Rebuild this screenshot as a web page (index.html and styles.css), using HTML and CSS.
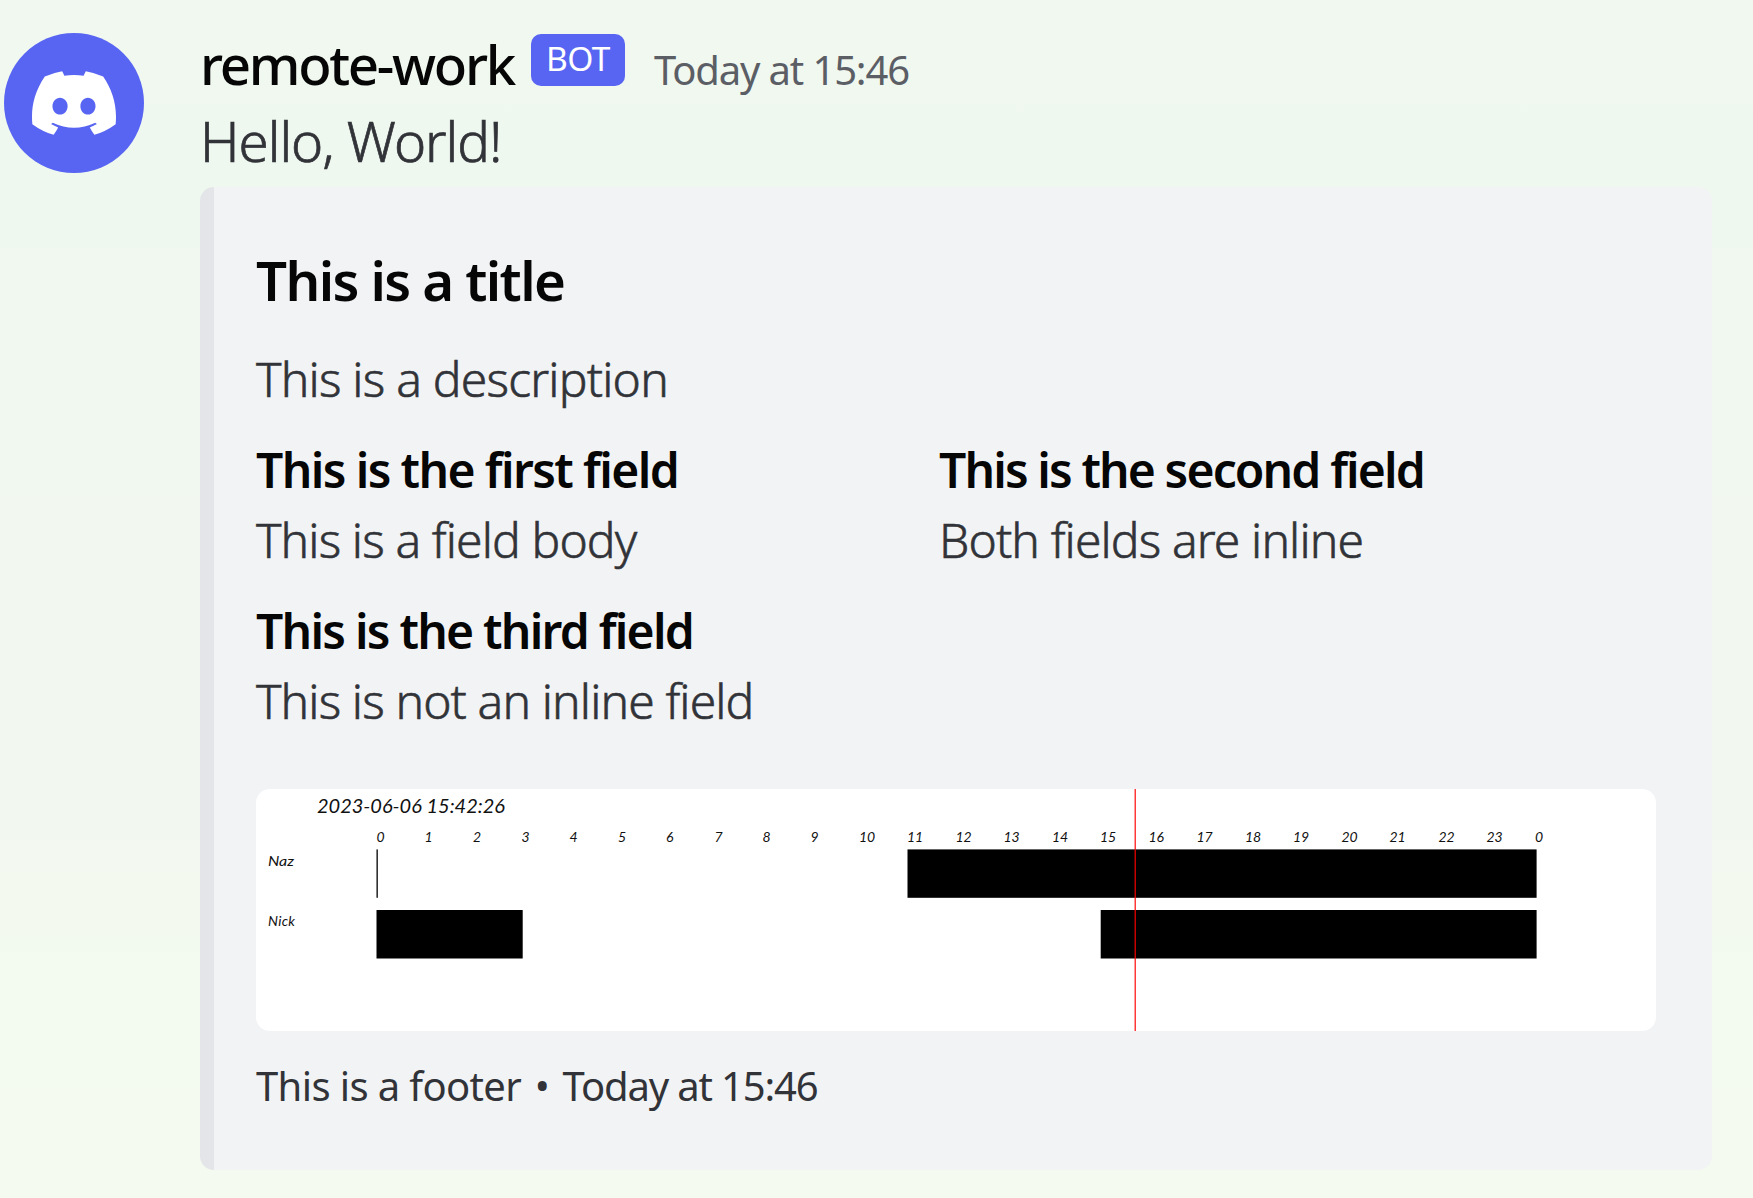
FILE: index.html
```html
<!DOCTYPE html>
<html lang="en">
<head>
<meta charset="utf-8">
<title>remote-work</title>
<link rel="stylesheet" href="styles.css">
</head>
<body>
<article class="message">
  <div class="avatar">
    <svg class="logo" viewBox="0 0 127.14 96.36"><path fill="#fff" d="M107.7,8.07A105.15,105.15,0,0,0,81.47,0a72.06,72.06,0,0,0-3.36,6.83A97.68,97.68,0,0,0,49,6.83,72.37,72.37,0,0,0,45.64,0,105.89,105.89,0,0,0,19.39,8.09C2.79,32.65-1.71,56.6.54,80.21h0A105.73,105.73,0,0,0,32.71,96.36,77.7,77.7,0,0,0,39.6,85.25a68.42,68.42,0,0,1-10.85-5.18c.91-.66,1.8-1.34,2.66-2a75.57,75.57,0,0,0,64.32,0c.87.71,1.76,1.39,2.66,2a68.68,68.68,0,0,1-10.87,5.19,77,77,0,0,0,6.89,11.1A105.25,105.25,0,0,0,126.6,80.22h0C129.24,52.84,122.09,29.11,107.7,8.07ZM42.45,65.69C36.18,65.69,31,60,31,53s5-12.74,11.43-12.74S54,46,53.89,53,48.84,65.69,42.45,65.69Zm42.24,0C78.41,65.69,73.25,60,73.25,53s5-12.74,11.44-12.74S96.23,46,96.12,53,91.08,65.69,84.69,65.69Z"/></svg>
  </div>
  <div class="body">
    <header class="header"><span class="name">remote-work</span><span class="badge">BOT</span><time class="time">Today at 15:46</time></header>
    <p class="content">Hello, World!</p>
    <section class="embed">
      <h2 class="title">This is a title</h2>
      <p class="text description">This is a description</p>
      <div class="fields">
        <div class="field"><h3 class="field-name">This is the first field</h3><p class="text">This is a field body</p></div>
        <div class="field"><h3 class="field-name second">This is the second field</h3><p class="text">Both fields are inline</p></div>
        <div class="field wide"><h3 class="field-name third">This is the third field</h3><p class="text">This is not an inline field</p></div>
      </div>
      <svg class="chart" viewBox="256 789 1400 242">
        <rect x="256" y="789" width="1400" height="242" fill="#fff"/>
        <g class="hand">
          <text class="stamp" x="317" y="812.5" textLength="188">2023-06-06 15:42:26</text>
          <text x="268" y="865.5" textLength="26" lengthAdjust="spacingAndGlyphs">Naz</text>
          <text x="268" y="926" textLength="27">Nick</text>
          <text x="376.5" y="841.5">0</text><text x="424.5" y="841.5">1</text><text x="473" y="841.5">2</text><text x="521.5" y="841.5">3</text><text x="569.5" y="841.5">4</text><text x="618" y="841.5">5</text><text x="666" y="841.5">6</text><text x="714.5" y="841.5">7</text><text x="762.5" y="841.5">8</text><text x="810.5" y="841.5">9</text>
          <text x="859" y="841.5">10</text><text x="907" y="841.5">11</text><text x="955.5" y="841.5">12</text><text x="1003.5" y="841.5">13</text><text x="1052" y="841.5">14</text><text x="1100" y="841.5">15</text><text x="1148.5" y="841.5">16</text><text x="1196.5" y="841.5">17</text><text x="1245" y="841.5">18</text><text x="1293" y="841.5">19</text><text x="1341.5" y="841.5">20</text><text x="1389.5" y="841.5">21</text><text x="1438.5" y="841.5">22</text><text x="1486.5" y="841.5">23</text><text x="1535" y="841.5">0</text>
        </g>
        <rect x="376.5" y="849.4" width="1.3" height="48.4"/>
        <rect x="907.5" y="849.4" width="629.1" height="48.4"/>
        <rect x="376.5" y="910" width="146.2" height="48.5"/>
        <rect x="1100.7" y="910" width="435.9" height="48.5"/>
        <rect x="1134.5" y="789" width="1.5" height="242" fill="#f00" fill-opacity=".78"/>
      </svg>
      <footer class="footer"><span>This is a footer</span><span>•</span><time class="when">Today at 15:46</time></footer>
    </section>
  </div>
</article>
</body>
</html>
```
FILE: styles.css
```css
* { box-sizing: border-box; }
html { height: 100%; }
body {
  margin: 0;
  height: 1198px;
  overflow: hidden;
  background: linear-gradient(180deg, #f1f8f0 0, #eef8ef 200px, #f1f8ef 300px, #f2f8ef 800px, #f3faef 1020px, #f4faef 100%);
  font-family: "Noto Sans", "Open Sans", sans-serif;
  color: #313338;
}
h2, h3, p { margin: 0; white-space: nowrap; }
.message { display: flex; gap: 56px; padding: 24px 41px 0 4px; }
.avatar {
  flex: none;
  width: 140px;
  height: 140px;
  margin-top: 9px;
  border-radius: 50%;
  background: #5865f2;
  display: flex;
  align-items: center;
  justify-content: center;
}
.logo { width: 84px; height: 64px; }
.body { flex: 1; }
.header { display: flex; height: 79px; white-space: nowrap; }
.name { width: 331px; font-size: 54.6px; line-height: 80px; font-weight: 500; letter-spacing: -2.3px; color: #060607; }
.badge {
  width: 94px;
  height: 52px;
  margin-top: 10px;
  border-radius: 10px;
  background: #5865f2;
  color: #fff;
  font-size: 33.5px;
  line-height: 48px;
  letter-spacing: -.6px;
  text-align: center;
}
.time { margin-left: 29px; font-size: 40px; line-height: 91px; letter-spacing: -1.15px; color: #5c5e66; }
.content { font-size: 54.6px; line-height: 77px; font-weight: 300; letter-spacing: -1px; -webkit-text-stroke: .7px #313338; }
.embed {
  height: 983px;
  margin-top: 7px;
  padding: 55px 56px 0 42px;
  border-left: 14px solid #e3e5e8;
  border-radius: 14px;
  background: #f2f3f5;
}
.title { font-size: 54.6px; line-height: 77px; font-weight: 600; letter-spacing: -1.6px; color: #060607; }
.text { font-size: 48px; line-height: 64px; font-weight: 300; letter-spacing: -.88px; -webkit-text-stroke: .6px #313338; }
.description { margin-top: 28px; letter-spacing: -.79px; }
.fields { display: grid; grid-template-columns: 683px 1fr; row-gap: 27px; margin-top: 27px; }
.field { display: grid; gap: 6px; }
.wide { grid-column: 1 / -1; }
.field-name { font-size: 48px; line-height: 64px; font-weight: 600; letter-spacing: -1.6px; color: #060607; }
.second { letter-spacing: -1.87px; }
.third { letter-spacing: -1.75px; }
.chart { display: block; width: 1400px; height: 242px; margin-top: 56px; border-radius: 14px; }
.hand { font-family: "Lato", sans-serif; font-size: 14px; font-style: italic; font-weight: 400; fill: #111; }
.stamp { font-size: 20px; }
.footer { display: flex; gap: 13.5px; margin-top: 27px; font-size: 40px; line-height: 56px; letter-spacing: -.63px; white-space: nowrap; }
.when { letter-spacing: -1.15px; }
```
